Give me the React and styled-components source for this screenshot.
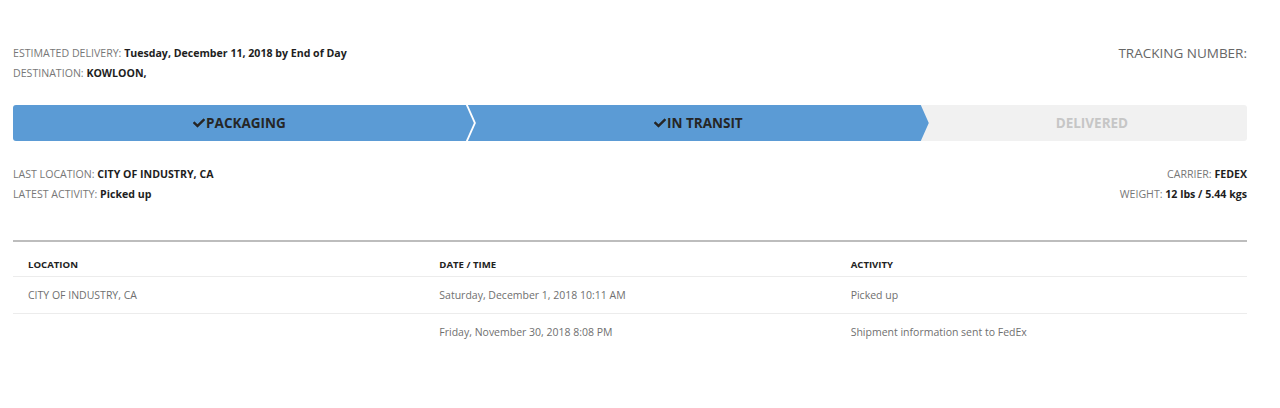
import styled, { createGlobalStyle } from 'styled-components';
import { FaCheck } from 'react-icons/fa';

const GlobalStyle = createGlobalStyle`
    body {
        margin: 0;
        background: #fff;
        font-family: "Open Sans", "Liberation Sans", sans-serif;
        color: #777;
    }
    * {
        box-sizing: border-box;
    }
`

const Page = styled.div`
    padding: 43px 33px 40px 13px;
`

const InfoRow = styled.div`
    display: flex;
    justify-content: space-between;
    align-items: flex-start;
    margin-top: ${props => props.top || 0}px;
`

const InfoColumn = styled.div`
    display: flex;
    flex-direction: column;
    align-items: ${props => props.right ? 'flex-end' : 'flex-start'};
    font-size: 10.6px;
    line-height: 20px;
`

const Label = styled.span`
    color: #777;
    text-transform: uppercase;
`

const Value = styled.b`
    color: #1e1e1e;
    font-weight: 700;
`

const TrackingTitle = styled.div`
    font-size: 13.5px;
    line-height: 20px;
    color: #666;
`

const ProgressBar = styled.div`
    display: flex;
    height: 36px;
    margin-top: 22px;
    border-radius: 3px;
    overflow: hidden;
    background: #fff;
`

const Step = styled.div`
    position: relative;
    z-index: ${props => props.done ? 2 : 1};
    flex: ${props => props.last ? '1 1 auto' : '0 0 37.35%'};
    margin-left: ${props => props.first ? 0 : props.last ? -8 : -6}px;
    display: flex;
    align-items: center;
    justify-content: center;
    padding: ${props => props.last ? '0 0 0 16px' : props.first ? '0 8px 0 0' : '0 8px 0 8px'};
    background: ${props => props.done ? '#5b9bd5' : '#f1f1f1'};
    color: ${props => props.done ? '#262626' : '#c6c6c6'};
    font-size: 13.5px;
    font-weight: 700;
    clip-path: ${props => props.last ? 'none' : props.first
        ? 'polygon(0 0, calc(100% - 8px) 0, 100% 50%, calc(100% - 8px) 100%, 0 100%)'
        : 'polygon(0 0, calc(100% - 8px) 0, 100% 50%, calc(100% - 8px) 100%, 0 100%, 8px 50%)'};

    svg {
        margin-right: 1px;
        margin-top: -1px;
    }
`

const Divider = styled.hr`
    margin: 36px 0 0;
    border: none;
    border-top: 2px solid #bdbdbd;
`

const Table = styled.table`
    width: 100%;
    border-collapse: collapse;
    table-layout: fixed;
    margin-top: 2px;

    th {
        text-align: left;
        font-size: 9.6px;
        font-weight: 700;
        color: #222;
        padding: 14px 15px 4px;
        line-height: 14px;
    }

    td {
        font-size: 10.5px;
        color: #6f6f6f;
        padding: 10px 15px 10px;
        line-height: 16px;
        border-top: 1px solid #ececec;
    }
`

const events = [
    { location: 'CITY OF INDUSTRY, CA', date: 'Saturday, December 1, 2018 10:11 AM', activity: 'Picked up' },
    { location: '', date: 'Friday, November 30, 2018 8:08 PM', activity: 'Shipment information sent to FedEx' },
]

const steps = [
    { name: 'PACKAGING', done: true },
    { name: 'IN TRANSIT', done: true },
    { name: 'DELIVERED', done: false },
]

const App = () => {
    return (
        <Page>
            <GlobalStyle />
            <InfoRow>
                <InfoColumn>
                    <div><Label>Estimated Delivery: </Label><Value>Tuesday, December 11, 2018 by End of Day</Value></div>
                    <div><Label>Destination: </Label><Value>KOWLOON,</Value></div>
                </InfoColumn>
                <TrackingTitle>TRACKING NUMBER:</TrackingTitle>
            </InfoRow>

            <ProgressBar>
                {steps.map((step, i) => (
                    <Step key={step.name} done={step.done} first={i === 0} last={i === steps.length - 1}>
                        {step.done && <FaCheck size={12} />}
                        {step.name}
                    </Step>
                ))}
            </ProgressBar>

            <InfoRow top={23}>
                <InfoColumn>
                    <div><Label>Last Location: </Label><Value>CITY OF INDUSTRY, CA</Value></div>
                    <div><Label>Latest Activity: </Label><Value>Picked up</Value></div>
                </InfoColumn>
                <InfoColumn right>
                    <div><Label>Carrier: </Label><Value>FEDEX</Value></div>
                    <div><Label>Weight: </Label><Value>12 lbs / 5.44 kgs</Value></div>
                </InfoColumn>
            </InfoRow>

            <Divider />
            <Table>
                <thead>
                    <tr>
                        <th>LOCATION</th>
                        <th>DATE / TIME</th>
                        <th>ACTIVITY</th>
                    </tr>
                </thead>
                <tbody>
                    {events.map((ev, i) => (
                        <tr key={i}>
                            <td>{ev.location}</td>
                            <td>{ev.date}</td>
                            <td>{ev.activity}</td>
                        </tr>
                    ))}
                </tbody>
            </Table>
        </Page>
    )
}

export default App;
